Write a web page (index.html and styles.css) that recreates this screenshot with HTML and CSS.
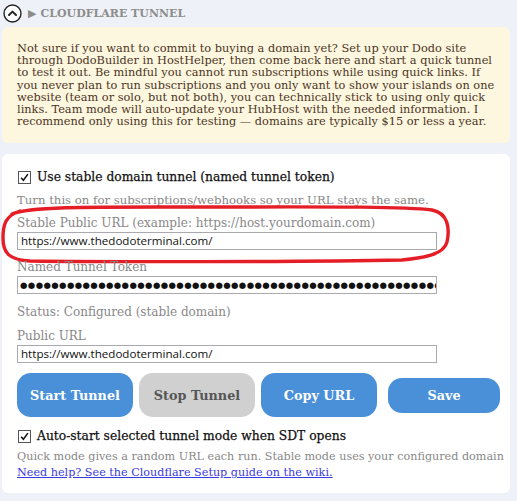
FILE: index.html
```html
<!DOCTYPE html>
<html>
<head>
<meta charset="utf-8">
<link rel="stylesheet" href="styles.css">
</head>
<body>
<div class="page">
  <div class="header">
    <span class="collapse-btn">
      <svg width="19" height="19" viewBox="0 0 19 19"><circle cx="9.5" cy="9.5" r="8.5" fill="#fff" stroke="#222" stroke-width="1.4"/><path d="M6 11 L9.5 7.6 L13 11" fill="none" stroke="#222" stroke-width="2" stroke-linecap="round" stroke-linejoin="round"/></svg>
    </span>
    <span class="tri">&#9654;</span>
    <span class="title">CLOUDFLARE TUNNEL</span>
  </div>
  <div class="notice">Not sure if you want to commit to buying a domain yet? Set up your Dodo site through DodoBuilder in HostHelper, then come back here and start a quick tunnel to test it out. Be mindful you cannot run subscriptions while using quick links. If you never plan to run subscriptions and you only want to show your islands on one website (team or solo, but not both), you can technically stick to using only quick links. Team mode will auto-update your HubHost with the needed information. I recommend only using this for testing — domains are typically $15 or less a year.</div>
  <div class="card">
    <label class="check-row"><span class="box"><svg width="13" height="13" viewBox="0 0 13 13"><path d="M2.5 6.8 L5.2 9.8 L10.5 2.5" fill="none" stroke="#111" stroke-width="1.8"/></svg></span>Use stable domain tunnel (named tunnel token)</label>
    <div class="hint">Turn this on for subscriptions/webhooks so your URL stays the same.</div>
    <div class="field highlighted">
      <div class="label">Stable Public URL (example: https://host.yourdomain.com)</div>
      <div class="input">https://www.thedodoterminal.com/</div>
      <svg class="ring" width="452" height="66" viewBox="0 0 452 66"><path d="M12 14 C 30 6, 100 7, 200 7 C 300 7, 400 6, 432 10 C 448 13, 450 28, 447 42 C 444 55, 422 58, 402 60 C 300 62, 100 62, 30 61 C 8 60, 3 52, 3 38 C 3 25, 5 16, 20 11" fill="none" stroke="#e51d26" stroke-width="3.4" stroke-linecap="round"/></svg>
    </div>
    <div class="field token">
      <div class="label">Named Tunnel Token</div>
      <div class="input dots">&#9679;&#9679;&#9679;&#9679;&#9679;&#9679;&#9679;&#9679;&#9679;&#9679;&#9679;&#9679;&#9679;&#9679;&#9679;&#9679;&#9679;&#9679;&#9679;&#9679;&#9679;&#9679;&#9679;&#9679;&#9679;&#9679;&#9679;&#9679;&#9679;&#9679;&#9679;&#9679;&#9679;&#9679;&#9679;&#9679;&#9679;&#9679;&#9679;&#9679;&#9679;&#9679;&#9679;&#9679;&#9679;&#9679;&#9679;&#9679;&#9679;&#9679;&#9679;&#9679;&#9679;&#9679;&#9679;&#9679;&#9679;&#9679;&#9679;</div>
    </div>
    <div class="status">Status: Configured (stable domain)</div>
    <div class="field public">
      <div class="label">Public URL</div>
      <div class="input">https://www.thedodoterminal.com/</div>
    </div>
    <div class="buttons">
      <button class="btn blue">Start Tunnel</button>
      <button class="btn gray">Stop Tunnel</button>
      <button class="btn blue">Copy URL</button>
      <button class="btn blue small">Save</button>
    </div>
    <label class="check-row second"><span class="box"><svg width="13" height="13" viewBox="0 0 13 13"><path d="M2.5 6.8 L5.2 9.8 L10.5 2.5" fill="none" stroke="#111" stroke-width="1.8"/></svg></span>Auto-start selected tunnel mode when SDT opens</label>
    <div class="note">Quick mode gives a random URL each run. Stable mode uses your configured domain</div>
    <a class="help" href="#">Need help? See the Cloudflare Setup guide on the wiki.</a>
  </div>
</div>
</body>
</html>
```
FILE: styles.css
```css
* { box-sizing: border-box; }
html, body { margin: 0; padding: 0; }
body {
  background: #eef1f7;
  font-family: "DejaVu Serif", serif;
  font-size: 11.35px;
  color: #3a2a1c;
  width: 517px;
  height: 501px;
  overflow: hidden;
}
.page { padding: 3px 7px 0 2px; }
.header {
  display: flex;
  align-items: center;
  height: 20px;
  padding-left: 1px;
}
.collapse-btn { display: flex; width: 19px; height: 19px; }
.tri { color: #8a8a8a; font-size: 11px; margin-left: 6px; font-family: "DejaVu Sans", sans-serif; }
.title {
  margin-left: 4px;
  color: #8d8d8d;
  font-weight: bold;
  font-size: 11px;
  letter-spacing: 0;
}
.notice {
  margin-top: 4px;
  background: #fef7e0;
  border-radius: 6px;
  padding: 15px 6px 16px 15px;
  line-height: 12.2px;
  color: #4b3524;
}
.card {
  margin-top: 11px;
  background: #fff;
  border-radius: 6px;
  padding: 16px 4px 12px 15px;
  height: 339px;
  color: #222;
}
.check-row {
  display: flex;
  align-items: center;
  gap: 6px;
  color: #111;
  font-size: 12.3px;
  height: 14px;
  padding-left: 1px;
  -webkit-text-stroke: 0.25px #111;
}
.box {
  width: 13px; height: 13px;
  border: 1px solid #555;
  background: #fff;
  display: flex;
  align-items: center;
  justify-content: center;
  -webkit-text-stroke: 0;
}
.box svg { display: block; }
.hint { color: #888; margin-top: 9px; line-height: 14px; font-size: 11.7px; }
.field { position: relative; margin-top: 9px; }
.field.token { margin-top: 10px; }
.field.public { margin-top: 10px; }
.label { color: #888; line-height: 14px; font-size: 12px; }
.input {
  margin-top: 2px;
  width: 420px;
  height: 18px;
  border: 1px solid #a9a9b0;
  background: #fff;
  font-family: "Open Sans", "DejaVu Sans", sans-serif;
  font-size: 11.6px;
  color: #111;
  line-height: 16px;
  padding: 0 3px;
  white-space: nowrap;
  overflow: hidden;
}
.input.dots { font-family: "DejaVu Sans", sans-serif; font-size: 8.5px; letter-spacing: 0.4px; padding-left: 2px; }
.ring {
  position: absolute;
  left: -17px;
  top: -16px;
  pointer-events: none;
}
.status { color: #888; margin-top: 11px; line-height: 14px; font-size: 12px; }
.buttons {
  display: flex;
  align-items: center;
  gap: 6px;
  margin-top: 10px;
}
.btn {
  font-family: inherit;
  font-weight: bold;
  font-size: 12.8px;
  border: none;
  border-radius: 14px;
  width: 116px;
  height: 44px;
  color: #fff;
  padding: 0;
}
.btn.blue { background: #4a90d9; }
.btn.gray { background: #d0d0d0; color: #555; }
.btn.small { width: 112px; height: 35px; margin-left: 5px; }
.check-row.second { margin-top: 12px; }
.note { color: #888; margin-top: 7px; line-height: 14px; font-size: 11.2px; white-space: nowrap; }
.help {
  display: block;
  width: max-content;
  color: #3a3ae0;
  margin-top: 2px;
  line-height: 14px;
  font-size: 11.2px;
}
```
